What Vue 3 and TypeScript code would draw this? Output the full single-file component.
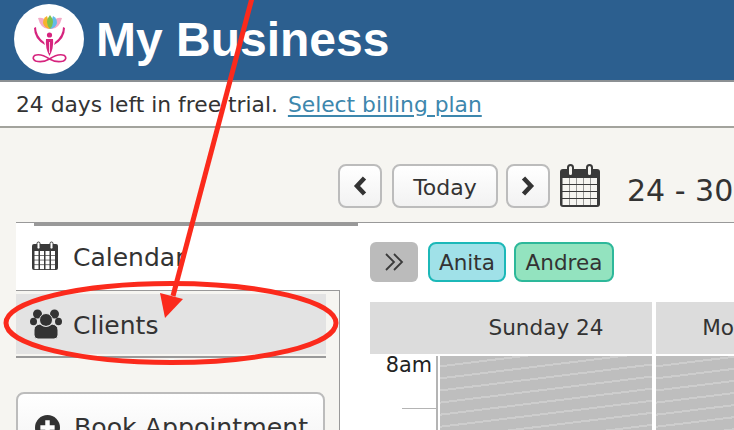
<template>
  <div class="page">
    <header class="brand">
      <div class="logo">
        <svg width="70" height="70" viewBox="0 0 70 70">
          <path d="M24 14 q6 -1 9 4 l3 7 q-9 1 -12 -11z" fill="#f3a9c6" />
          <path d="M48 14 q-6 -1 -9 4 l-3 7 q9 1 12 -11z" fill="#f3a9c6" />
          <path d="M29 19 q0 -5 4 -7 q2 5 3 13 q-6 -1 -7 -6z" fill="#f6b32c" />
          <path d="M43 19 q0 -5 -4 -7 q-2 5 -3 13 q6 -1 7 -6z" fill="#62bbe8" />
          <path d="M36 25 q-6 -7 0 -14 q6 7 0 14z" fill="#7fc14a" />
          <circle cx="35.500" cy="31" r="2.600" fill="#d6247e" />
          <path d="M22 23 q0 9 8 15 l1 3 q-11 -6 -11 -17z M49 23 q0 9 -8 15 l-1 3 q11 -6 11 -17z" fill="#d6247e" />
          <path d="M32 35 h7 q1 9 -3.500 17 q-4.500 -8 -3.500 -17z" fill="#d6247e" />
          <path d="M35.500 38 v11" stroke="#fff" stroke-width="0.800" />
          <path d="M35.500 55 q-9 -6 -15 -3.500 q-3 3 1 5.500 q7 2 14 -2 q7 4 14 2 q4 -2.500 1 -5.500 q-6 -2.500 -15 3.500z" fill="none" stroke="#d6247e" stroke-width="1.700" />
        </svg>
      </div>
      <h1>My Business</h1>
    </header>

    <div class="trial">
      <span>24 days left in free trial.</span>
      <a href="#">Select billing plan</a>
    </div>

    <section class="toolbar">
      <button class="nav-btn">
        <svg width="16" height="22" viewBox="0 0 16 22"><polyline points="12.500,3 5,11 12.500,19" fill="none" stroke="#333" stroke-width="4.500" /></svg>
      </button>
      <button class="today">Today</button>
      <button class="nav-btn">
        <svg width="16" height="22" viewBox="0 0 16 22"><polyline points="3.500,3 11,11 3.500,19" fill="none" stroke="#333" stroke-width="4.500" /></svg>
      </button>
      <svg class="cal-big" width="40" height="44" viewBox="0 0 40 44">
        <rect x="0" y="5" width="40" height="38" rx="3" fill="#3a3a3a" />
        <rect x="8" y="1" width="5" height="11" rx="2.500" fill="#f6f5f1" stroke="#3a3a3a" stroke-width="2" />
        <rect x="27" y="1" width="5" height="11" rx="2.500" fill="#f6f5f1" stroke="#3a3a3a" stroke-width="2" />
        <g fill="#f6f5f1">
          <rect v-for="c in bigCells" :key="c.k" :x="c.x" :y="c.y" width="6.500" height="6" />
        </g>
      </svg>
      <span class="range">24 - 30</span>
    </section>

    <div class="rule"><div class="rule-thick"></div></div>

    <section class="body">
      <aside class="side">
        <div class="side-item active">
          <svg class="side-icon" width="28" height="30" viewBox="0 0 28 30">
            <rect x="1" y="3" width="26" height="26" rx="2" fill="#3a3a3a" />
            <rect x="6" y="1" width="3" height="7" rx="1.500" fill="#fff" stroke="#3a3a3a" />
            <rect x="19" y="1" width="3" height="7" rx="1.500" fill="#fff" stroke="#3a3a3a" />
            <g fill="#fff">
              <rect v-for="c in smallCells" :key="c.k" :x="c.x" :y="c.y" width="4" height="4" />
            </g>
          </svg>
          <span>Calendar</span>
        </div>
        <div class="side-rest">
          <div class="side-item clients">
            <svg class="side-icon" width="32" height="30" viewBox="0 0 32 30">
              <g fill="#333">
                <circle cx="7.500" cy="5" r="4.500" />
                <circle cx="24.500" cy="5" r="4.500" />
                <ellipse cx="3.500" cy="12.500" rx="3.500" ry="3.800" />
                <ellipse cx="28.500" cy="12.500" rx="3.500" ry="3.800" />
              </g>
              <circle cx="16" cy="11" r="6.500" fill="#333" stroke="#e3e3e3" stroke-width="1" />
              <path d="M4 21 q0 -5 6 -6 q6 5 12 0 q6 1 6 6 v5 q0 4 -4 4 h-16 q-4 0 -4 -4z" fill="#333" stroke="#e3e3e3" stroke-width="1" />
            </svg>
            <span>Clients</span>
          </div>
          <div class="clients-line"></div>
          <button class="book">
            <svg width="25" height="25" viewBox="0 0 28 28">
              <circle cx="14" cy="14" r="14" fill="#333" />
              <path d="M14 6 v16 M6 14 h16" stroke="#fff" stroke-width="5" />
            </svg>
            <span>Book Appointment</span>
          </button>
        </div>
      </aside>

      <main class="content">
        <div class="chips">
          <button class="toggle">
            <svg width="20" height="18" viewBox="0 0 20 18"><path d="M2 1 L10 9 L2 17 M10 1 L18 9 L10 17" fill="none" stroke="#3a3a3a" stroke-width="1.800" /></svg>
          </button>
          <span v-for="s in staff" :key="s.name" class="chip" :class="s.cls">{{ s.name }}</span>
        </div>

        <div class="heads">
          <div v-for="(d, i) in days" :key="d" class="head" :class="{ first: i === 0 }">{{ d }}</div>
        </div>

        <div class="grid">
          <div class="times">
            <div class="hour">8am</div>
            <div class="tick"></div>
          </div>
          <div v-for="d in days" :key="d" class="cell"></div>
        </div>
      </main>
    </section>

    <svg class="marks" width="734" height="430" viewBox="0 0 734 430">
      <line x1="252" y1="-2" x2="173" y2="296" stroke="#fb2a1c" stroke-width="5" />
      <polygon points="160,293 183,299 165,318" fill="#fb2a1c" />
      <ellipse cx="171" cy="323" rx="165" ry="39.500" fill="none" stroke="#fb2a1c" stroke-width="5" />
    </svg>
  </div>
</template>

<script setup lang="ts">
interface Staff {
  name: string;
  cls: string;
}

const staff: Staff[] = [
  { name: "Anita", cls: "anita" },
  { name: "Andrea", cls: "andrea" },
];

const days = ["Sunday 24", "Monday 25"];

function cells(cols: number, rows: number, x0: number, y0: number, dx: number, dy: number) {
  const out = [];
  for (let r = 0; r < rows; r++) {
    for (let c = 0; c < cols; c++) {
      out.push({ k: r + "-" + c, x: x0 + c * dx, y: y0 + r * dy });
    }
  }
  return out;
}

const bigCells = cells(5, 4, 2.5, 14, 7, 7);
const smallCells = cells(4, 4, 3.5, 10, 5.5, 4.7);
</script>

<style>
html,
body {
  margin: 0;
  background: #f6f5f1;
}
</style>

<style scoped>
.page {
  position: relative;
  width: 734px;
  height: 430px;
  overflow: hidden;
  background: #f6f5f1;
  color: #333;
  font-family: "DejaVu Sans", sans-serif;
}
.brand {
  display: flex;
  align-items: center;
  height: 82px;
  padding-left: 14px;
  box-sizing: border-box;
  background: #2c5f8f;
  border-bottom: 2px solid #8c9093;
}
.logo {
  width: 70px;
  height: 70px;
  border-radius: 50%;
  background: #fff;
  margin-bottom: 2px;
}
h1 {
  margin: 0 0 2px 12px;
  color: #fff;
  font-family: "Liberation Sans", sans-serif;
  font-size: 48px;
  font-weight: 700;
}
.trial {
  display: flex;
  align-items: center;
  gap: 10px;
  height: 46px;
  box-sizing: border-box;
  padding-left: 16px;
  background: #fff;
  border-bottom: 2px solid #a3a39d;
  font-size: 21.800px;
}
.trial a {
  color: #3d87ad;
  text-decoration: underline;
  text-underline-offset: 3px;
}
.toolbar {
  display: flex;
  align-items: center;
  height: 94px;
  box-sizing: border-box;
  padding: 22px 0 0 338px;
  white-space: nowrap;
}
button {
  box-sizing: border-box;
  font-family: inherit;
  color: #333;
}
.nav-btn,
.today {
  display: flex;
  align-items: center;
  justify-content: center;
  height: 44px;
  padding: 0;
  border: 2px solid #bcbcbc;
  border-radius: 8px;
  background: linear-gradient(#fff, #f2f2f2);
}
.nav-btn {
  width: 44px;
}
.today {
  width: 106px;
  margin: 0 8px 0 10px;
  padding-top: 3px;
  font-size: 22px;
}
.cal-big {
  margin: 0 27px 0 10px;
  flex: none;
}
.range {
  font-size: 30px;
  margin-top: 8px;
}
.rule {
  height: 3px;
  margin-left: 16px;
  border-top: 1px solid #999;
  background: #fff;
}
.rule-thick {
  width: 324px;
  height: 3px;
  margin-left: 18px;
  background: #999;
}
.body {
  display: flex;
  height: 204px;
}
.side {
  width: 324px;
  margin-left: 16px;
  flex: none;
}
.side-item {
  display: flex;
  align-items: center;
  font-size: 25px;
}
.side-item span {
  position: relative;
  top: 1px;
}
.side-icon {
  flex: none;
}
.active {
  height: 64px;
  padding: 0 0 4px 15px;
  box-sizing: border-box;
  gap: 14px;
  background: #fff;
}
.side-rest {
  height: 140px;
  padding-top: 3px;
  box-sizing: border-box;
  border-top: 1px solid #999;
  border-right: 1px solid #999;
}
.clients {
  width: 310px;
  height: 60px;
  box-sizing: border-box;
  padding-left: 14px;
  gap: 11px;
  background: #e3e3e3;
}
.clients-line {
  width: 310px;
  height: 2px;
  margin-top: 2px;
  background: #999;
}
.book {
  display: flex;
  align-items: center;
  gap: 14px;
  width: 309px;
  height: 70px;
  margin: 34px 0 0 0;
  padding: 0 0 0 17px;
  border: 2px solid #bcbcbc;
  border-radius: 8px;
  background: linear-gradient(#fff, #f2f2f2);
  font-size: 25.200px;
  white-space: nowrap;
}
.content {
  flex: 1;
  padding: 16px 0 0 30px;
  background: #fff;
  overflow: hidden;
}
.chips {
  display: flex;
  align-items: center;
  height: 40px;
  gap: 8px;
}
.toggle {
  display: flex;
  align-items: center;
  justify-content: center;
  width: 48px;
  height: 40px;
  margin-right: 2px;
  padding: 0;
  border: none;
  border-radius: 6px;
  background: #bbb;
}
.chip {
  display: flex;
  align-items: center;
  justify-content: center;
  height: 40px;
  box-sizing: border-box;
  border: 2px solid;
  border-radius: 8px;
  font-size: 21.500px;
}
.anita {
  width: 78px;
  background: #a0e1e8;
  border-color: #1cb8b8;
}
.andrea {
  width: 100px;
  background: #93e3bf;
  border-color: #2db89a;
}
.heads {
  display: flex;
  gap: 4px;
  margin-top: 20px;
}
.head {
  flex: none;
  width: 212px;
  height: 52px;
  line-height: 52px;
  text-align: center;
  background: #dcdcdc;
  font-size: 21.600px;
}
.head.first {
  padding-left: 70px;
}
.grid {
  display: flex;
  gap: 4px;
  margin-top: 2px;
}
.times {
  flex: none;
  width: 66px;
  margin-right: -2px;
  height: 80px;
  border-right: 2px solid #b4b4b4;
}
.hour {
  height: 52px;
  padding-right: 4px;
  text-align: right;
  font-size: 20.800px;
  line-height: 18px;
  color: #222;
}
.tick {
  height: 1px;
  margin-left: 32px;
  background: #b4b4b4;
}
.cell {
  flex: none;
  width: 212px;
  height: 80px;
  background: repeating-linear-gradient(-7deg, #bebebe 0 10px, #cdcdcd 10px 12px);
}
.marks {
  position: absolute;
  left: 0;
  top: 0;
  pointer-events: none;
}
</style>
